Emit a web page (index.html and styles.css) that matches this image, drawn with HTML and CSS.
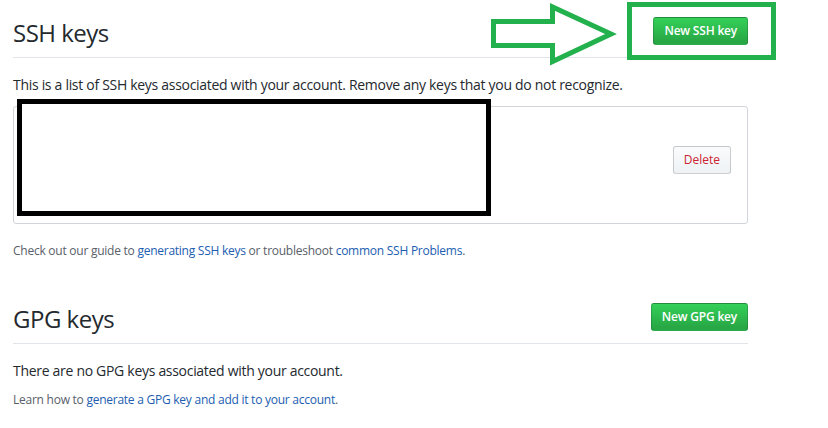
FILE: index.html
```html
<!DOCTYPE html>
<html lang="en">
<head>
<meta charset="utf-8">
<title>SSH and GPG keys</title>
<link rel="stylesheet" href="styles.css">
</head>
<body>
<div class="page">
  <section class="keys-section">
    <div class="subhead">
      <h2 class="subhead-title">SSH keys</h2>
      <a class="btn btn-primary" href="#">New SSH key</a>
    </div>
    <p class="lead-text">This is a list of SSH keys associated with your account. Remove any keys that you do not recognize.</p>
    <div class="key-box">
      <div class="redaction"></div>
      <button class="btn btn-danger" type="button">Delete</button>
    </div>
    <p class="note">Check out our guide to <a href="#">generating SSH keys</a> or troubleshoot <a href="#">common SSH Problems</a>.</p>
  </section>

  <section class="keys-section gpg">
    <div class="subhead">
      <h2 class="subhead-title">GPG keys</h2>
      <a class="btn btn-primary" href="#">New GPG key</a>
    </div>
    <p class="lead-text">There are no GPG keys associated with your account.</p>
    <p class="note note-tight">Learn how to <a href="#">generate a GPG key and add it to your account</a>.</p>
  </section>

  <svg class="annot-arrow" width="126" height="64" viewBox="0 0 126 64" aria-hidden="true">
    <polygon points="2.5,18.5 61.5,18.5 61.5,4 120,31 61.5,58.5 61.5,42.5 2.5,42.5" fill="none" stroke="#22b14c" stroke-width="5" stroke-linejoin="miter"/>
  </svg>
  <div class="annot-box"></div>
</div>
</body>
</html>
```

FILE: styles.css
```css
html, body {
  margin: 0;
  padding: 0;
  background: #ffffff;
}

body {
  font-family: "Open Sans", "Noto Sans", "Liberation Sans", sans-serif;
  color: #24292e;
}

.page {
  position: relative;
  width: 735px;
  padding-left: 13px;
  height: 428px;
}

.keys-section.gpg {
  margin-top: 26px;
}

.subhead {
  display: flex;
  justify-content: space-between;
  align-items: flex-start;
  padding: 16px 0 9px;
  border-bottom: 1px solid #e1e4e8;
}

.subhead-title {
  margin: 2px 0 0;
  font-size: 24px;
  line-height: 30px;
  font-weight: 400;
  letter-spacing: -0.5px;
  color: #24292e;
}

.btn {
  display: inline-block;
  box-sizing: border-box;
  height: 28px;
  padding: 0 10px;
  font-family: inherit;
  font-size: 12px;
  line-height: 26px;
  font-weight: 600;
  text-decoration: none;
  border: 1px solid rgba(27, 31, 35, 0.2);
  border-radius: 3px;
  white-space: nowrap;
  cursor: pointer;
}

.btn-primary {
  margin-top: 1px;
  color: #ffffff;
  background-color: #28a745;
  background-image: linear-gradient(-180deg, #34d058 0%, #28a745 90%);
  letter-spacing: -0.2px;
}

.btn-danger {
  color: #cb2431;
  font-weight: 400;
  background-color: #fafbfc;
  background-image: linear-gradient(-180deg, #fafbfc 0%, #eff3f6 90%);
  padding: 0 10px;
}

.lead-text {
  margin: 17px 0 0;
  font-size: 14px;
  line-height: 20px;
  letter-spacing: -0.3px;
  color: #24292e;
}

.key-box {
  position: relative;
  box-sizing: border-box;
  height: 118px;
  margin-top: 11px;
  padding: 39px 16px 0;
  display: flex;
  justify-content: flex-end;
  align-items: flex-start;
  border: 1px solid #d1d5da;
  border-radius: 3px;
}

.redaction {
  position: absolute;
  left: 3px;
  top: -8px;
  width: 464px;
  height: 107px;
  border: 5px solid #000000;
  background: #ffffff;
}

.note {
  margin: 18px 0 0;
  font-size: 12px;
  line-height: 18px;
  letter-spacing: -0.25px;
  color: #586069;
}

.note-tight {
  margin-top: 10px;
}

.note a {
  color: #215db0;
  text-decoration: none;
}

.annot-arrow {
  position: absolute;
  left: 491px;
  top: 3px;
}

.annot-box {
  position: absolute;
  left: 627px;
  top: 2px;
  width: 139px;
  height: 48px;
  border: 5px solid #22b14c;
}
```
